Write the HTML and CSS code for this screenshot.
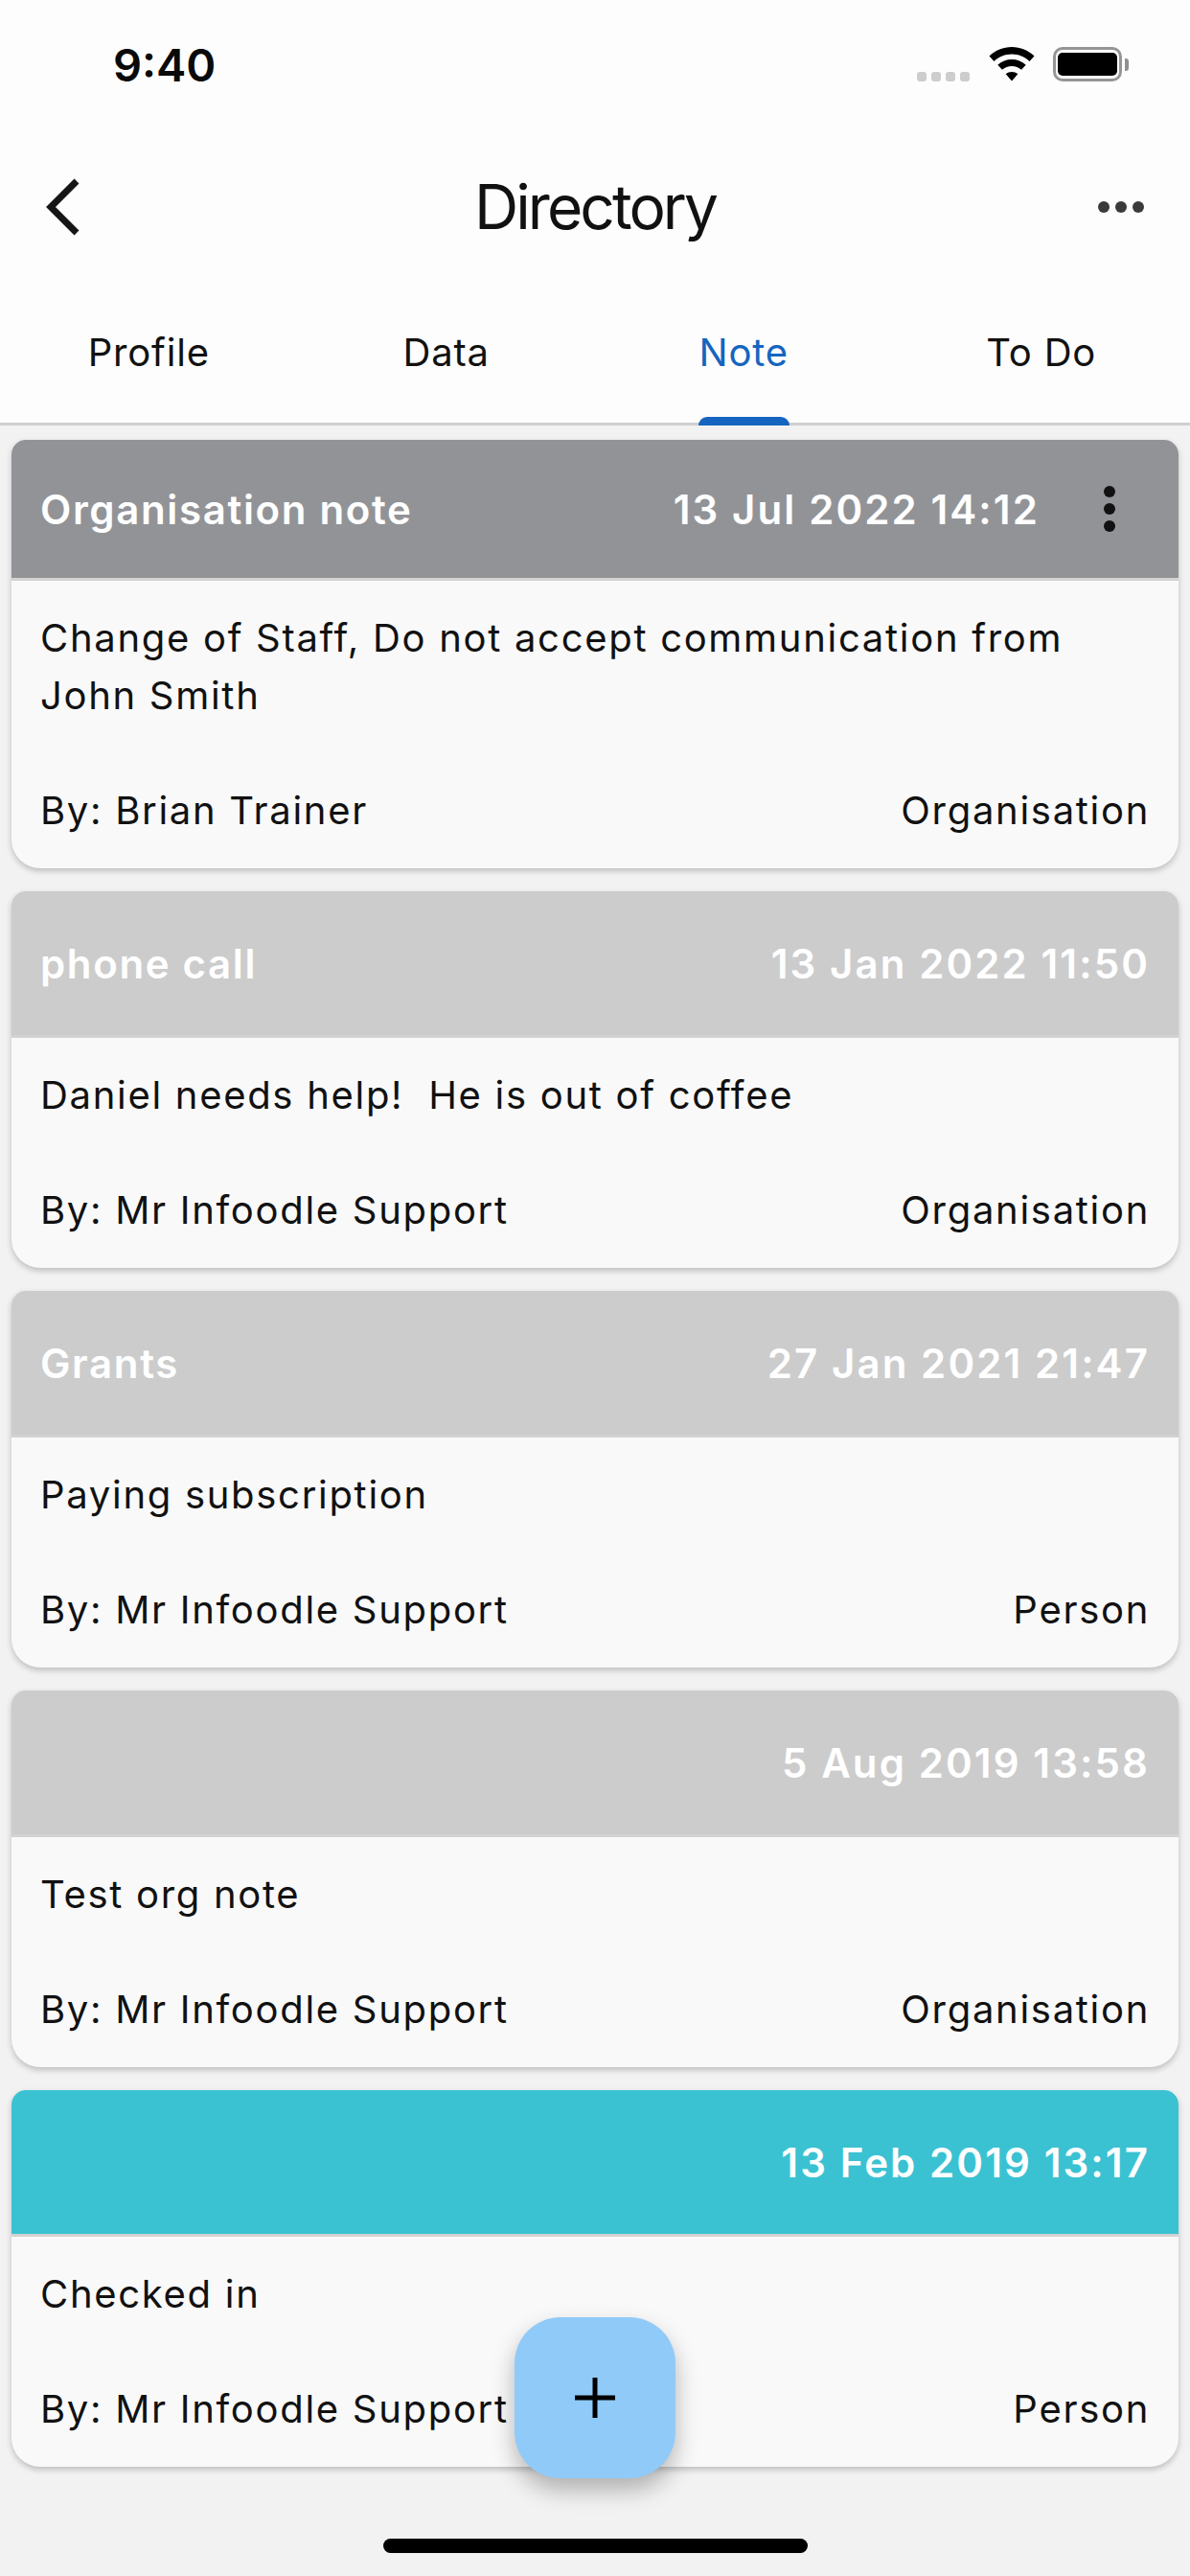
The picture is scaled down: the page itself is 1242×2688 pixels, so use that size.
FILE: index.html
```html
<!DOCTYPE html>
<html lang="en">
<head>
<meta charset="utf-8">
<title>Directory</title>
<link rel="stylesheet" href="styles.css">
</head>
<body>
<div class="screen">
  <header class="top">
    <div class="status">
      <span class="time">9:40</span>
      <div class="status-icons">
        <div class="signal"><i></i><i></i><i></i><i></i></div>
        <svg class="wifi" width="48" height="36" viewBox="0 0 48 36"><path d="M24 0C15 0 7 3.400 0.500 9.500L5.500 15C10.500 10.300 17 7.600 24 7.600C31 7.600 37.500 10.300 42.500 15L47.500 9.500C41 3.400 33 0 24 0Z"/><path d="M24 13C18.500 13 13.300 15 9.300 18.800L14 23.800C16.700 21.300 20.200 19.900 24 19.900C27.800 19.900 31.300 21.300 34 23.800L38.700 18.800C34.700 15 29.500 13 24 13Z"/><path d="M24 26C21.600 26 19.500 26.800 17.700 28.300L24 35.500L30.300 28.300C28.500 26.800 26.400 26 24 26Z"/></svg>
        <div class="battery"><div class="battery-body"><div class="battery-fill"></div></div><div class="battery-cap"></div></div>
      </div>
    </div>
    <div class="nav">
      <svg class="back" width="36" height="60" viewBox="0 0 36 60"><path d="M33 3L6 30L33 57"/></svg>
      <h1 class="title">Directory</h1>
      <div class="more"><i></i><i></i><i></i></div>
    </div>
    <nav class="tabs">
      <a class="tab">Profile</a>
      <a class="tab">Data</a>
      <a class="tab active">Note</a>
      <a class="tab">To Do</a>
    </nav>
  </header>
  <main class="list">
    <article class="card">
      <div class="card-head head-dark head-menu">
        <span class="subject">Organisation note</span>
        <span class="date">13 Jul 2022 14:12</span>
        <div class="kebab"><i></i><i></i><i></i></div>
      </div>
      <div class="card-body">
        <p class="note">Change of Staff, Do not accept communication from<br>John Smith</p>
        <div class="meta"><span>By: Brian Trainer</span><span>Organisation</span></div>
      </div>
    </article>
    <article class="card">
      <div class="card-head head-light">
        <span class="subject">phone call</span>
        <span class="date">13 Jan 2022 11:50</span>
      </div>
      <div class="card-body">
        <p class="note">Daniel needs help!&nbsp; He is out of coffee</p>
        <div class="meta"><span>By: Mr Infoodle Support</span><span>Organisation</span></div>
      </div>
    </article>
    <article class="card">
      <div class="card-head head-light">
        <span class="subject">Grants</span>
        <span class="date">27 Jan 2021 21:47</span>
      </div>
      <div class="card-body">
        <p class="note">Paying subscription</p>
        <div class="meta"><span>By: Mr Infoodle Support</span><span>Person</span></div>
      </div>
    </article>
    <article class="card">
      <div class="card-head head-light">
        <span class="date">5 Aug 2019 13:58</span>
      </div>
      <div class="card-body">
        <p class="note">Test org note</p>
        <div class="meta"><span>By: Mr Infoodle Support</span><span>Organisation</span></div>
      </div>
    </article>
    <article class="card">
      <div class="card-head head-teal">
        <span class="date">13 Feb 2019 13:17</span>
      </div>
      <div class="card-body">
        <p class="note">Checked in</p>
        <div class="meta"><span>By: Mr Infoodle Support</span><span>Person</span></div>
      </div>
    </article>
  </main>
  <button class="fab" aria-label="Add"><svg width="42" height="42" viewBox="0 0 42 42"><path d="M21 0V42M0 21H42"/></svg></button>
  <div class="home-bar"></div>
</div>
</body>
</html>
```

FILE: styles.css
```css
* { box-sizing: border-box; }
html, body { margin: 0; padding: 0; }
body { width: 1242px; height: 2688px; background: #f2f2f2; font-family: Inter, sans-serif; overflow: hidden; }
.screen { position: relative; width: 1242px; height: 2688px; background: #f2f2f2; }

.top { height: 444px; background: #fdfdfd; border-bottom: 3px solid #cfcfcf; display: flex; flex-direction: column; }
.status { height: 150px; flex: none; display: flex; justify-content: space-between; padding: 44px 64px 0 118px; }
.time { font-weight: 600; font-size: 47px; line-height: 48px; color: #0a0a0a; }
.status-icons { display: flex; align-items: flex-start; height: 36px; margin-top: 5px; }
.signal { display: flex; gap: 5px; margin-top: 26px; margin-right: 20px; }
.signal i { display: block; width: 10px; height: 10px; border-radius: 3px; background: #cdcdcd; }
.wifi { fill: #000; margin-right: 19px; }
.battery { display: flex; align-items: center; }
.battery-body { width: 72px; height: 36px; border: 3px solid #959595; border-radius: 10px; padding: 3px 2px; background: #fff; }
.battery-fill { width: 100%; height: 100%; background: #000; border-radius: 5px; }
.battery-cap { width: 4px; height: 13px; background: #8f8f8f; border-radius: 0 3px 3px 0; margin-left: 3px; }

.nav { height: 132px; flex: none; display: flex; align-items: center; justify-content: space-between; padding: 0 48px 0 47px; position: relative; }
.back { fill: none; stroke: #161616; stroke-width: 7; }
.title { position: absolute; left: 0; right: 0; top: 0; margin: 0; text-align: center; font-weight: 400; font-size: 64px; line-height: 132px; letter-spacing: -2.9px; color: #111; }
.more { display: flex; gap: 6px; }
.more i { display: block; width: 12px; height: 12px; border-radius: 50%; background: #3a3a3a; }

.tabs { flex: 1; display: grid; grid-template-columns: repeat(4, 1fr); }
.tab { position: relative; display: flex; justify-content: center; padding-top: 56px; font-size: 40px; line-height: 60px; letter-spacing: 0.8px; color: #111; }
.tab.active { color: #1565c0; }
.tab.active::after { content: ""; position: absolute; left: 50%; bottom: -3px; width: 95px; height: 9px; margin-left: -47px; background: #1565c0; border-radius: 9px 9px 0 0; }

.list { display: flex; flex-direction: column; gap: 24px; padding: 15px 12px 0; }
.card { border-radius: 15px 15px 30px 30px; background: #f9f9f9; overflow: hidden; box-shadow: 0 3px 6px rgba(0,0,0,.22); }
.card-head { height: 153px; border-bottom: 3px solid #d2d2d2; padding: 0 30px; display: flex; align-items: center; justify-content: space-between; color: #fff; font-size: 42px; font-weight: 600; letter-spacing: 1.65px; }
.head-menu { height: 147px; padding-right: 66px; }
.head-dark { background: #929397; }
.head-light { background: #cccccc; }
.head-teal { background: #3ac2d2; }
.date { margin-left: auto; letter-spacing: 2.1px; }
.kebab { display: flex; flex-direction: column; gap: 6px; margin-left: 67px; }
.kebab i { display: block; width: 12px; height: 12px; border-radius: 50%; background: #111; }
.card-body { padding: 30px; display: flex; flex-direction: column; gap: 60px; color: #111; font-size: 40px; line-height: 60px; letter-spacing: 1.7px; }
.note { margin: 0; }
.meta { display: flex; justify-content: space-between; }

.fab { position: absolute; left: 537px; top: 2418px; width: 168px; height: 168px; border: 0; border-radius: 48px; background: #90caf9; display: flex; align-items: center; justify-content: center; padding: 0; box-shadow: 0 12px 24px rgba(0,0,0,.28); }
.fab svg { fill: none; stroke: #000; stroke-width: 5; }
.home-bar { position: absolute; left: 400px; top: 2649px; width: 443px; height: 15px; border-radius: 8px; background: #000; }
```
